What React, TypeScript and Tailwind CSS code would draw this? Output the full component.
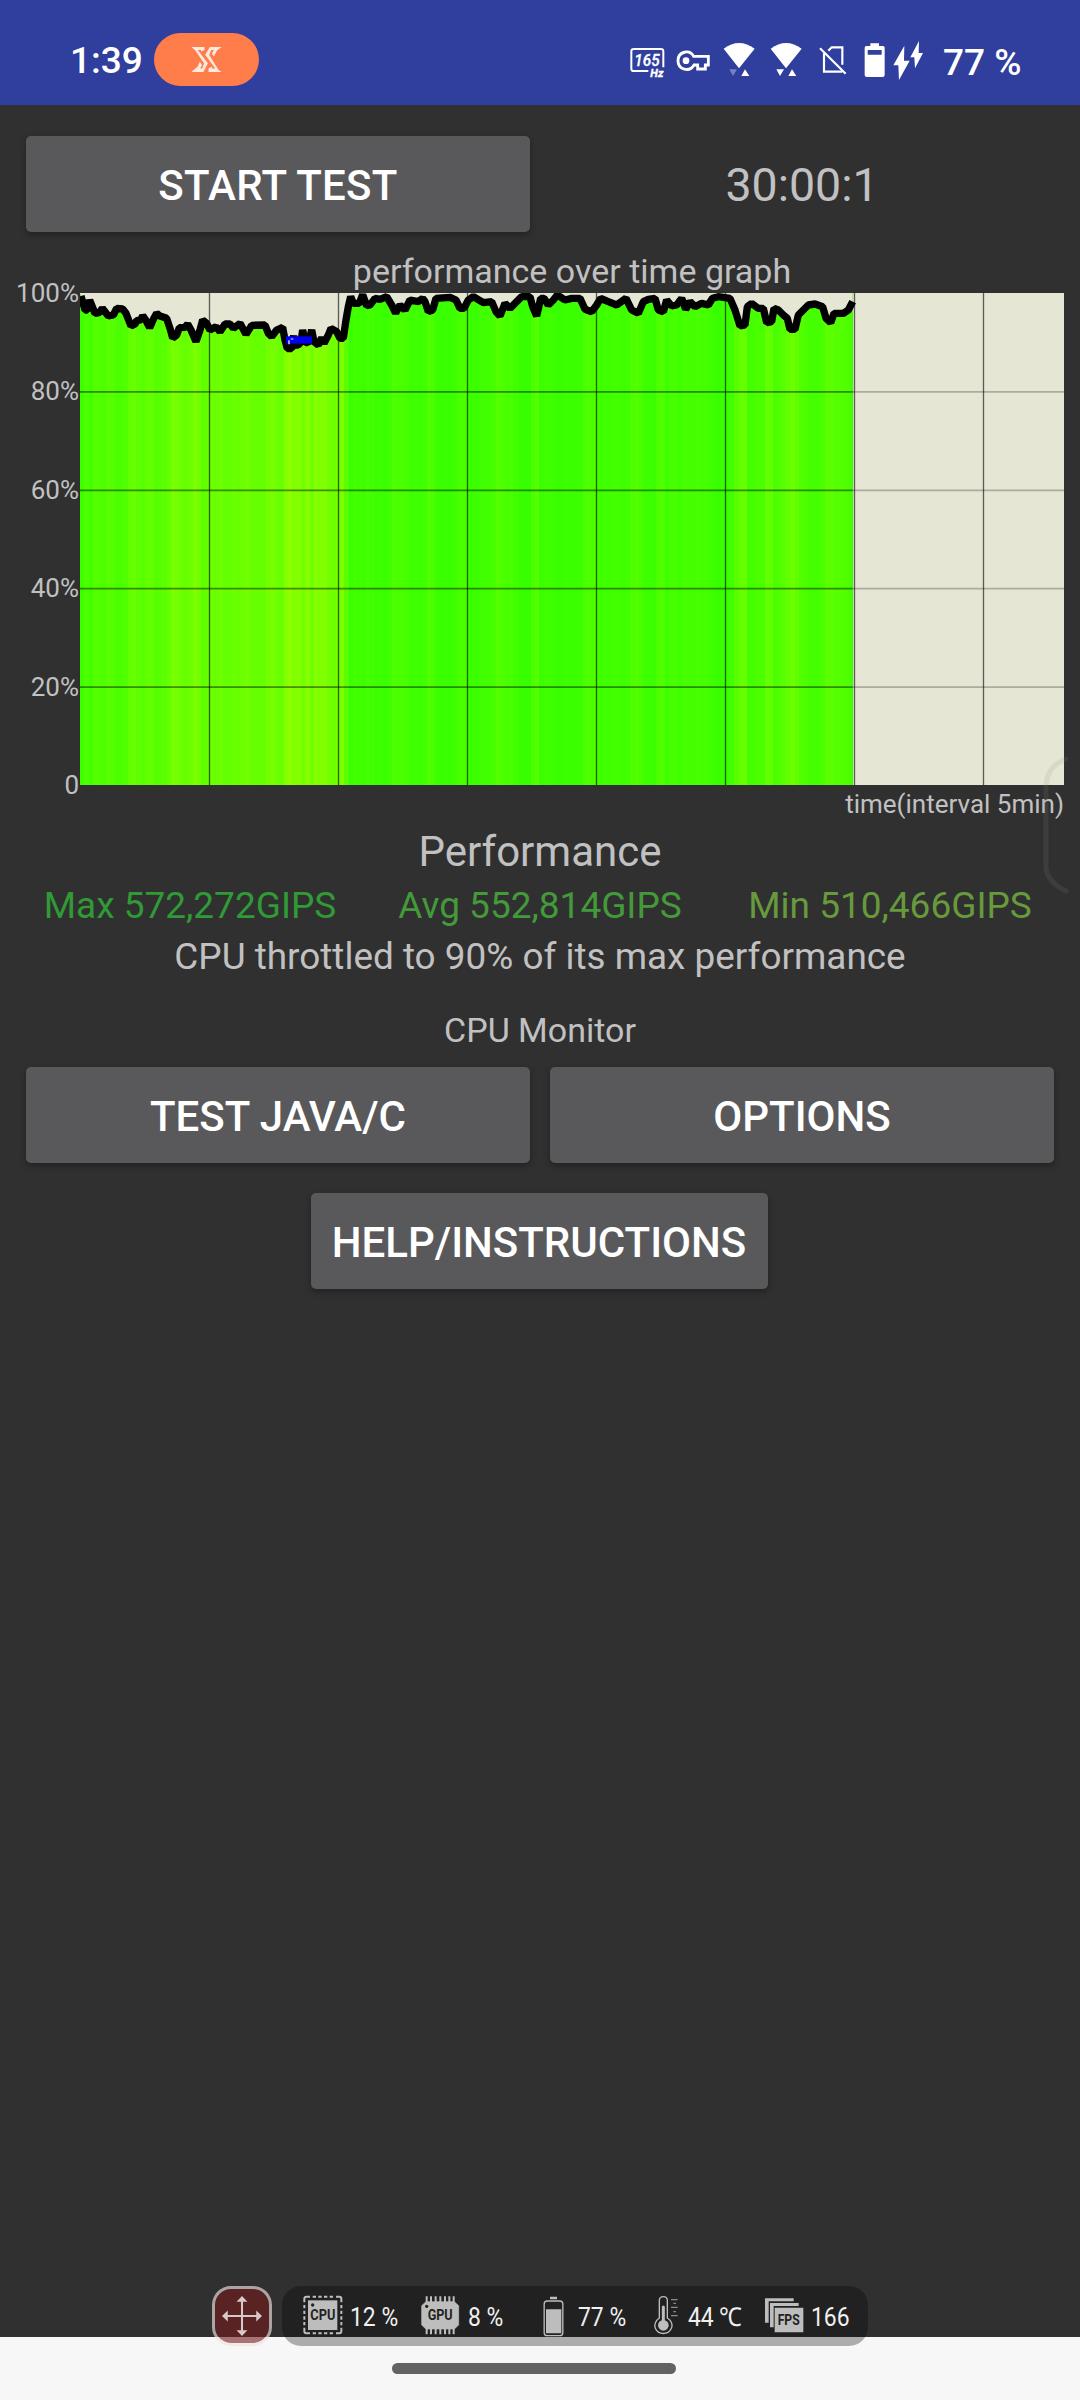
import type { ReactNode } from 'react'
import { clsx } from 'clsx'

// trace of the benchmark, [x, y] in thirds of a pixel from the plot's top left corner
const TRACE: [number, number][] = [
  [3, 9], [15, 51], [22, 51], [29, 21], [45, 61], [58, 59], [67, 46], [85, 69], [100, 66], [110, 46], [128, 48],
  [138, 61], [153, 99], [165, 93], [170, 83], [182, 81], [188, 68], [196, 79], [209, 104], [220, 79], [230, 61],
  [240, 69], [260, 76], [270, 106], [278, 135], [290, 126], [298, 104], [315, 103], [323, 93], [333, 111],
  [348, 146], [360, 111], [368, 81], [380, 91], [390, 111], [408, 101], [420, 116], [435, 93], [450, 93],
  [460, 106], [480, 91], [498, 124], [515, 97], [555, 96], [565, 121], [575, 131], [590, 111], [608, 103],
  [615, 141], [622, 167], [635, 167], [641, 128], [645, 156], [655, 156], [663, 146], [668, 111], [675, 146],
  [685, 151], [695, 111], [702, 146], [715, 156], [725, 134], [732, 151], [745, 126], [753, 106], [770, 116],
  [780, 136], [790, 136], [798, 81], [805, 41], [812, 11], [820, 31], [838, 31], [848, 5], [860, 38],
  [870, 36], [885, 16], [900, 19], [920, 11], [935, 36], [947, 60], [960, 36], [975, 51], [990, 21], [1015, 26],
  [1028, 16], [1035, 26], [1045, 56], [1058, 51], [1068, 16], [1110, 13], [1128, 21], [1140, 46], [1152, 46],
  [1165, 21], [1180, 11], [1210, 29], [1235, 26], [1248, 56], [1260, 69], [1275, 31], [1290, 46], [1310, 26],
  [1325, 11], [1350, 11], [1358, 41], [1370, 69], [1382, 16], [1392, 16], [1405, 36], [1420, 21], [1432, 6],
  [1455, 21], [1475, 16], [1500, 16], [1515, 49], [1535, 56], [1550, 36], [1562, 16], [1585, 26], [1610, 36],
  [1638, 16], [1655, 51], [1675, 61], [1690, 26], [1705, 19], [1725, 16], [1735, 51], [1750, 56], [1760, 21],
  [1775, 39], [1790, 36], [1805, 16], [1817, 49], [1830, 26], [1845, 41], [1865, 31], [1885, 36], [1897, 16],
  [1915, 11], [1950, 16], [1965, 51], [1980, 99], [1995, 96], [2002, 41], [2015, 31], [2035, 46], [2050, 46],
  [2060, 89], [2075, 86], [2082, 46], [2095, 51], [2110, 66], [2122, 76], [2130, 109], [2145, 109], [2155, 66],
  [2170, 51], [2185, 36], [2205, 33], [2228, 41], [2238, 76], [2252, 89], [2262, 61], [2290, 61], [2305, 51],
  [2318, 26],
]

const STRIPE = 13
const TRACE_END = 2318

function traceAt(x: number) {
  const i = TRACE.findIndex((p) => p[0] >= x)
  if (i <= 0) return TRACE[i === 0 ? 0 : TRACE.length - 1][1]
  const [x0, y0] = TRACE[i - 1]
  const [x1, y1] = TRACE[i]
  return y0 + ((y1 - y0) * (x - x0)) / (x1 - x0)
}

const stripes = Array.from({ length: Math.ceil(TRACE_END / STRIPE) }, (_, i) => {
  const x = i * STRIPE
  const y = traceAt(x + STRIPE / 2)
  return { x, color: `rgb(${Math.round(50 + y * 0.54)} 255 0)` }
})

const line = TRACE.map((p) => p.join(',')).join(' ')

function PerformanceGraph() {
  return (
    <svg viewBox="0 0 2952 1476" className="block h-[492px] w-[984px] bg-[#e6e6d4]">
      {stripes.map((s) => (
        <rect key={s.x} x={s.x} y={0} width={Math.min(STRIPE + 1, TRACE_END - s.x)} height={1476} fill={s.color} shapeRendering="crispEdges" />
      ))}
      <polygon points={`0,0 ${line} ${TRACE_END},0`} fill="#e6e6d4" />
      {[1, 2, 3, 4, 5, 6, 7].map((n) => (
        <path key={n} d={`M${n * 387 + 1.5} 0V1476`} stroke="#000" strokeOpacity={0.6} strokeWidth={4} />
      ))}
      {[1, 2, 3, 4].map((n) => (
        <g key={n} stroke="#000" strokeWidth={5}>
          <path d={`M0 ${n * 295.2 + 1.5}H2952`} strokeOpacity={0.25} />
          <path d={`M0 ${n * 295.2 + 1.5}H${TRACE_END}`} strokeOpacity={0.25} />
        </g>
      ))}
      <polyline points={line} fill="none" stroke="#000" strokeWidth={22} strokeLinejoin="bevel" />
      <path d="M618 130h78v22h-78z" fill="#0000f0" />
      <path d="M624 142h6v12h-6zM632 136h8v4h-8z" fill="#9a9aff" />
    </svg>
  )
}

function StatusBar() {
  return (
    <header className="flex h-[105px] items-start bg-[#303e9e] text-white">
      <span className="ml-[70px] mt-[34px] w-[84px] text-[37px] font-medium leading-[54px]">1:39</span>
      <div className="mt-[33px] flex h-[53px] w-[105px] items-center justify-center rounded-full bg-[#ff7d4b]">
        <svg viewBox="0 0 92 74" className="h-[25px] w-[31px]" fill="#ffe9df">
          <path d="M1 0H40V9L30 13V9H20L50 48L37 74H1L20 58L26 44L33 53L27 64H33L39 49L13 10Z" />
          <path d="M91 0H56L42 23L72 64H62V58L52 64V74H91L82 68L54 24L60 9H68L62 20L68 28L77 10Z" />
        </svg>
      </div>
      <div className="ml-[371px] mt-[40px] flex h-[40px]">
        {/* refresh rate */}
        <svg viewBox="90 120 105 120" className="h-[40px] w-[35px]" fill="none" stroke="#fff" strokeWidth="6">
          <path d="M145 213H101Q94 213 94 206V154Q94 147 102 147H182Q190 147 190 154V202" />
          <text x="103" y="198" fill="#fff" stroke="#fff" strokeWidth="1" fontSize="51" fontStyle="italic" fontWeight="500" textLength="76" lengthAdjust="spacingAndGlyphs">165</text>
          <text x="151" y="230" fill="#fff" stroke="#fff" strokeWidth="1" fontSize="34" fontStyle="italic" fontWeight="700" textLength="39" lengthAdjust="spacingAndGlyphs">Hz</text>
        </svg>
        {/* vpn key */}
        <svg viewBox="229 120 105 120" className="ml-[11px] h-[40px] w-[35px]" fill="none" stroke="#fff" strokeWidth="8.500">
          <path d="M282 169C270 147 235 154 235 182C235 210 270 218 283 195H294V207H317V195H326V169Z" />
          <circle cx="259" cy="182" r="10" fill="#fff" stroke="none" />
        </svg>
        {/* wifi, two radios */}
        <svg viewBox="370 120 96 120" className="ml-[12px] h-[40px] w-[32px]" fill="#fff">
          <path d="M372 146Q418 112 465 146L418 205Z" />
          <path d="M389 208H412L400 228Z" fillOpacity="0.35" />
          <path d="M436 208L449 228H425Z" />
        </svg>
        <svg viewBox="511 120 96 120" className="ml-[15px] h-[40px] w-[32px]" fill="#fff">
          <path d="M513 146Q559 112 606 146L559 205Z" />
          <path d="M530 208H553L541 228Z" />
          <path d="M577 208L590 228H566Z" />
        </svg>
        {/* no sim */}
        <svg viewBox="655 120 87 120" className="ml-[16px] h-[40px] w-[29px]" fill="none" stroke="#fff" strokeWidth="6.500">
          <path d="M661 145L738 221" />
          <path d="M673 160V215H728M686 152L696 142H728V194" />
        </svg>
        {/* battery */}
        <svg viewBox="793 120 66 120" className="ml-[17px] h-[40px] w-[22px]" fill="#fff">
          <path fillRule="evenodd" d="M812 130H838V138H850Q855 138 855 143V225Q855 231 849 231H801Q795 231 795 225V143Q795 138 800 138H812ZM804 150V164H846V150Z" />
        </svg>
        <svg viewBox="880 120 93 120" className="ml-[7px] h-[40px] w-[31px]" fill="#fff">
          <path d="M914 137L881 196H896L898 240L930 182H913Z" />
          <path d="M958 123L932 172H944L946 205L970 159H957Z" />
        </svg>
      </div>
      <span className="ml-[19px] mt-[36px] whitespace-nowrap text-[37px] font-medium leading-[54px]">77 %</span>
    </header>
  )
}

function Button({ children, className }: { children: ReactNode; className?: string }) {
  return (
    <button
      className={clsx(
        'h-[96px] rounded-[5px] bg-[#59595b] pt-[4px] text-[42px] font-medium leading-none text-white shadow-[0_3px_6px_rgba(0,0,0,0.3)]',
        className,
      )}
    >
      {children}
    </button>
  )
}

function Reading({ children, className }: { children: string; className: string }) {
  return (
    <span className={clsx('origin-left whitespace-nowrap text-[26px] leading-[62px] text-[#f0f0f0]', className)}>{children}</span>
  )
}

function MonitorOverlay() {
  return (
    <div className="absolute left-[212px] top-[2286px] flex h-[60px]">
      <div className="flex h-[60px] w-[60px] items-center justify-center rounded-[19px] border-[3px] border-[#f0e4e4]/65 bg-[#74191a]/60 bg-clip-padding">
        <svg viewBox="0 0 118 118" className="h-[40px] w-[40px]" fill="#d8c8c8" stroke="#d8c8c8">
          <path d="M59 8V110M8 59H110" strokeWidth="6" />
          <path d="M59 0L75 17H43ZM59 118L75 101H43ZM0 59L17 43V75ZM118 59L101 43V75Z" stroke="none" />
        </svg>
      </div>
      <div className="ml-[10px] flex h-[60px] w-[586px] rounded-[19px] bg-black/30">
        {/* cpu */}
        <svg viewBox="308 76 120 120" className="ml-[21px] mt-[9px] h-[40px] w-[40px]" fill="#bdbdbd">
          <path d="M323 92H411V181H323Z" />
          <path d="M312 98V87Q312 81 318 81H329M407 81H417Q423 81 423 87V98M423 174V185Q423 191 417 191H407M329 191H318Q312 191 312 185V174" fill="none" stroke="#bdbdbd" strokeWidth="6" />
          <path d="M337 81H403M337 191H403M312 106V172M423 106V172" fill="none" stroke="#bdbdbd" strokeWidth="6" strokeDasharray="10 7" />
          <circle cx="337" cy="106" r="5" fill="#222" />
          <text x="330" y="152" fill="#222" fontSize="45" fontWeight="700" textLength="75" lengthAdjust="spacingAndGlyphs">CPU</text>
        </svg>
        <Reading className="ml-[7px] w-[72px] scale-x-[0.88]">12 %</Reading>
        {/* gpu */}
        <svg viewBox="661 76 120 120" className="-ml-[2px] mt-[9px] h-[40px] w-[40px]" fill="#bdbdbd">
          <path d="M679 96H764L777 108V166L764 178H679L666 166V108Z" stroke="#bdbdbd" strokeWidth="2" strokeLinejoin="round" />
          <path d="M681 80V194M694 80V194M708 80V194M722 80V194M736 80V194M749 80V194M762 80V194" stroke="#bdbdbd" strokeWidth="6" />
          <circle cx="681" cy="110" r="5" fill="#222" />
          <text x="684" y="152" fill="#222" fontSize="45" fontWeight="700" textLength="75" lengthAdjust="spacingAndGlyphs">GPU</text>
        </svg>
        <Reading className="ml-[8px] w-[64px] scale-x-[0.88]">8 %</Reading>
        {/* battery */}
        <svg viewBox="12 74 63 126" className="ml-[11px] mt-[9px] h-[42px] w-[21px]">
          <rect x="15.500" y="92" width="56" height="104" rx="9" fill="none" stroke="#bdbdbd" strokeWidth="4" />
          <path d="M21 117H67V189H21ZM33 79H54V87H33Z" fill="#bdbdbd" />
        </svg>
        <Reading className="ml-[14px] w-[66px] scale-x-[0.88]">77 %</Reading>
        {/* thermometer */}
        <svg viewBox="342 76 75 120" className="ml-[10px] mt-[9px] h-[40px] w-[25px]">
          <path d="M358 145V93Q358 81 370 81Q382 81 382 93V145C394 152 400 166 393 178C384 196 356 196 347 178C341 166 347 152 358 145Z" fill="none" stroke="#bdbdbd" strokeWidth="4" />
          <path d="M370 112V165" stroke="#bdbdbd" strokeWidth="9" strokeLinecap="round" />
          <circle cx="370" cy="167" r="16" fill="#bdbdbd" />
          <path d="M393 90H413M400 101H408M393 113H413M400 126H408M393 138H413" stroke="#8a8a8a" strokeWidth="4" />
        </svg>
        <Reading className="ml-[9px] w-[66px] scale-x-[0.88]">44 ℃</Reading>
        {/* frame rate */}
        <svg viewBox="670 76 120 120" className="ml-[10px] mt-[9px] h-[40px] w-[40px]" fill="#bdbdbd">
          <path d="M673 86H759V95H684V159H673ZM688 100H774V109H699V173H688ZM702 114H788V188H702Z" />
          <text x="711" y="166" fill="#222" fontSize="44" fontWeight="700" textLength="66" lengthAdjust="spacingAndGlyphs">FPS</text>
        </svg>
        <Reading className="ml-[7px] scale-x-[0.88]">166</Reading>
      </div>
    </div>
  )
}

export default function App() {
  return (
    <div className="relative flex h-[2400px] w-[1080px] flex-col overflow-hidden bg-[#303030] font-['Roboto',sans-serif] text-[#c1c1c1]">
      <StatusBar />

      <main className="flex-1">
        <div className="grid grid-cols-2 items-center gap-5 px-[26px] pt-[31px]">
          <Button className="tracking-[0.3px]">START TEST</Button>
          <div className="pt-[2px] text-center text-[46.500px] leading-none">30:00:1</div>
        </div>

        <h2 className="mt-[18px] pl-[64px] text-center text-[34px] leading-[43px]">performance over time graph</h2>
        <div className="flex">
          <div className="flex h-[492px] w-[80px] flex-col justify-between pr-[1px] text-right text-[26px]">
            {['100%', '80%', '60%', '40%', '20%', '0'].map((label) => (
              <span key={label} className="h-0 leading-[0px]">{label}</span>
            ))}
          </div>
          <PerformanceGraph />
        </div>
        <p className="pr-[16px] text-right text-[26px] leading-[38px]">time(interval 5min)</p>

        <h1 className="text-center text-[42px] leading-[57px]">Performance</h1>
        <div className="grid grid-cols-3 px-[15px] text-center text-[37px] leading-[51px]">
          <span className="text-[#2f9a36]">Max 572,272GIPS</span>
          <span className="text-[#449a3a]">Avg 552,814GIPS</span>
          <span className="text-[#679a3c]">Min 510,466GIPS</span>
        </div>
        <p className="pt-[1px] text-center text-[36.900px] leading-[50px]">CPU throttled to 90% of its max performance</p>
        <p className="mt-[23px] text-center text-[34px] leading-[51px]">CPU Monitor</p>

        <div className="mt-[11px] grid grid-cols-2 gap-5 px-[26px]">
          <Button>TEST JAVA/C</Button>
          <Button>OPTIONS</Button>
        </div>
        <div className="mt-[30px] flex justify-center pr-[2px]">
          <Button className="w-[457px]">HELP/INSTRUCTIONS</Button>
        </div>
      </main>

      <footer className="flex h-[63px] justify-center bg-[#f7f7f7] pr-[12px] pt-[26px]">
        <div className="h-[11px] w-[284px] rounded-full bg-[#636363]" />
      </footer>

      {/* edge panel handle */}
      <svg viewBox="0 0 28 140" className="absolute left-[1042px] top-[755px] h-[140px] w-[28px]" fill="none">
        <path d="M24 4C12 9 4 16 4 34V112C4 122 13 131 24 136" stroke="#8c9080" strokeOpacity="0.15" strokeWidth="5" strokeLinecap="round" />
      </svg>
      <MonitorOverlay />
    </div>
  )
}
